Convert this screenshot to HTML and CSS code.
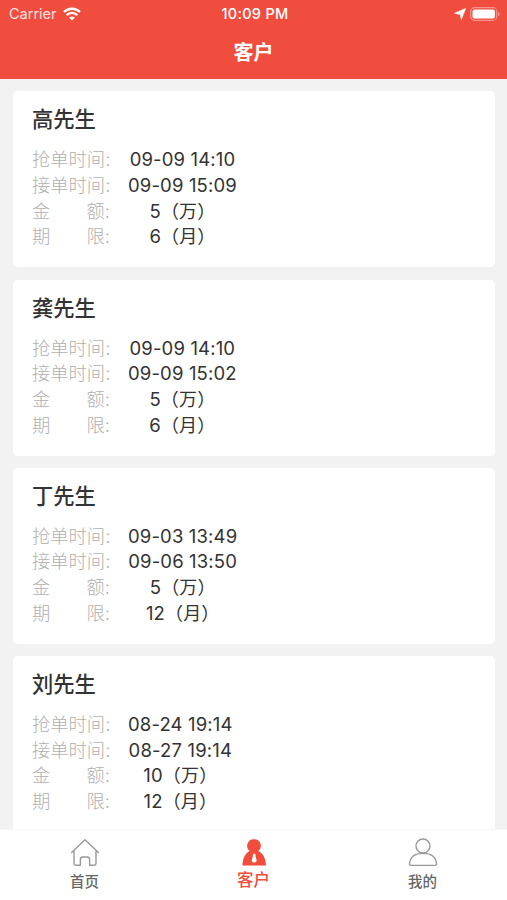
FILE: index.html
```
<!DOCTYPE html>
<html lang="zh-CN">
<head>
  <meta charset="UTF-8" />
  <title>客户</title>
  <link rel="stylesheet" href="styles.css">
</head>
<body>
  <div class="app">
    <header class="header">
      <div class="status-bar">
        <div class="status-left">
          <span class="carrier">Carrier</span>
          <svg class="wifi" width="18" height="14" viewBox="0 0 18 14">
            <path d="M1 5a11.5 11.5 0 0 1 16 0M3.7 8.1a7.5 7.5 0 0 1 10.6 0" fill="none" stroke="#fff" stroke-width="2.3" />
            <path d="M9 13.6L6.2 10.8a4 4 0 0 1 5.6 0z" fill="#fff" />
          </svg>
        </div>
        <span class="time">10:09 PM</span>
        <div class="status-right">
          <svg width="12" height="12" viewBox="0 0 12 12">
            <path d="M11.8 0.2L7.4 11.7L6 6.6L0.3 5.2z" fill="#fff" stroke="#fff" stroke-width=".4" />
          </svg>
          <svg width="31" height="14" viewBox="0 0 31 14">
            <rect x="0.7" y="0.7" width="26" height="12.6" rx="3.8" fill="none" stroke="#fff" stroke-opacity=".4" stroke-width="1.2" />
            <rect x="2.5" y="2.5" width="22.4" height="9" rx="2" fill="#fff" />
            <path d="M28.3 4.7v4.6c1.7-.7 1.7-3.9 0-4.6z" fill="#fff" fill-opacity=".5" />
          </svg>
        </div>
      </div>
      <h1 class="title">客户</h1>
    </header>

    <main class="list">
      <section class="card">
        <h2 class="name">高先生</h2>
        <div class="info">
          <div class="labels">
            <p><span>抢单时间</span>:</p>
            <p><span>接单时间</span>:</p>
            <p><span>金</span><span>额:</span></p>
            <p><span>期</span><span>限:</span></p>
          </div>
          <div class="values">
            <p>09-09 14:10</p>
            <p>09-09 15:09</p>
            <p>5<span class="unit">（万）</span></p>
            <p>6<span class="unit">（月）</span></p>
          </div>
        </div>
      </section>

      <section class="card">
        <h2 class="name">龚先生</h2>
        <div class="info">
          <div class="labels">
            <p><span>抢单时间</span>:</p>
            <p><span>接单时间</span>:</p>
            <p><span>金</span><span>额:</span></p>
            <p><span>期</span><span>限:</span></p>
          </div>
          <div class="values">
            <p>09-09 14:10</p>
            <p>09-09 15:02</p>
            <p>5<span class="unit">（万）</span></p>
            <p>6<span class="unit">（月）</span></p>
          </div>
        </div>
      </section>

      <section class="card">
        <h2 class="name">丁先生</h2>
        <div class="info">
          <div class="labels">
            <p><span>抢单时间</span>:</p>
            <p><span>接单时间</span>:</p>
            <p><span>金</span><span>额:</span></p>
            <p><span>期</span><span>限:</span></p>
          </div>
          <div class="values">
            <p>09-03 13:49</p>
            <p>09-06 13:50</p>
            <p>5<span class="unit">（万）</span></p>
            <p>12<span class="unit">（月）</span></p>
          </div>
        </div>
      </section>

      <section class="card">
        <h2 class="name">刘先生</h2>
        <div class="info">
          <div class="labels">
            <p><span>抢单时间</span>:</p>
            <p><span>接单时间</span>:</p>
            <p><span>金</span><span>额:</span></p>
            <p><span>期</span><span>限:</span></p>
          </div>
          <div class="values">
            <p>08-24 19:14</p>
            <p>08-27 19:14</p>
            <p>10<span class="unit">（万）</span></p>
            <p>12<span class="unit">（月）</span></p>
          </div>
        </div>
      </section>
    </main>

    <nav class="tabbar">
      <div class="tab">
        <svg width="30" height="30" viewBox="0 0 30 30" fill="none" stroke="#999" stroke-width="1.4" stroke-linecap="round" stroke-linejoin="round">
          <path d="M1.6 14.4L15 1.8l13.4 12.6M4 12.6v13q0 1.7 1.7 1.7h4.7v-6q0-2.3 2.3-2.3h4.6q2.3 0 2.3 2.3v6h4.7q1.7 0 1.7-1.7v-13" />
        </svg>
        <span>首页</span>
      </div>
      <div class="tab active">
        <svg width="30" height="30" viewBox="0 0 30 30">
          <path d="M15 1.2a6.6 6.6 0 0 1 4.4 11.7c4.2 2.1 7.2 6.6 7.6 14.6H3.4c.4-8 3.2-12.5 7.2-14.6A6.6 6.6 0 0 1 15 1.2z" fill="#f14c3c" />
          <path d="M15.2 15.8c1.2 0 1.6 1 1.3 2.2l1.1 4.2c.2 1.5-1.2 2.4-2.4 2.4s-2.6-.9-2.4-2.4l1.1-4.2c-.3-1.2.1-2.2 1.3-2.2z" fill="#fff" />
        </svg>
        <span>客户</span>
      </div>
      <div class="tab">
        <svg width="30" height="30" viewBox="0 0 30 30" fill="none" stroke="#999" stroke-width="1.4" stroke-linejoin="round">
          <circle cx="15" cy="8" r="7" />
          <path d="M1.5 26q.8-10.6 13.5-10.6T28.5 26q0 1.4-1.4 1.4H2.9q-1.4 0-1.4-1.4z" />
        </svg>
        <span>我的</span>
      </div>
    </nav>
  </div>
</body>
</html>
```
FILE: styles.css
```
* {
  box-sizing: border-box;
  margin: 0;
  padding: 0;
}
body {
  background: #f2f2f2;
  color: #333;
  font-family: Inter, "Noto Sans CJK SC", sans-serif;
}
svg {
  display: block;
}
.app {
  display: flex;
  flex-direction: column;
  height: 900px;
  overflow: hidden;
}
.header {
  flex: none;
  height: 79px;
  background: #f04d3e;
  color: #fff;
}
.status-bar {
  display: grid;
  grid-template-columns: 1fr auto 1fr;
  align-items: center;
  height: 27px;
  padding: 0 6px 0 9px;
}
.status-left,
.status-right {
  display: flex;
  align-items: center;
}
.status-left {
  gap: 6px;
}
.status-right {
  justify-content: flex-end;
  gap: 4px;
}
.carrier {
  font-size: 14.5px;
  opacity: 0.85;
}
.time {
  font-size: 14.5px;
  font-weight: 500;
  letter-spacing: 0.3px;
}
.title {
  font-size: 20px;
  font-weight: 700;
  line-height: 52px;
  text-align: center;
}
.list {
  flex: 1;
  min-height: 0;
  padding: 12.4px 12px 0 13px;
  overflow: hidden;
}
.card {
  height: 176px;
  margin-bottom: 12.2px;
  padding: 13px 19px;
  background: #fff;
  border-radius: 5px;
}
.name {
  font-size: 21.3px;
  font-weight: 500;
  line-height: 30px;
}
.info {
  display: flex;
  gap: 18px;
  margin-top: 13px;
  line-height: 25.7px;
}
/* two-character labels are spread to the width of the long ones */
.labels {
  width: 78px;
  color: #b0b0b0;
  font-size: 18.3px;
  font-weight: 300;
}
.labels p {
  display: flex;
  justify-content: space-between;
}
.values {
  font-size: 18.5px;
  letter-spacing: 0.15px;
  text-align: center;
}
.labels p,
.values p {
  height: 25.7px;
  white-space: nowrap;
}
.unit {
  font-family: "Noto Sans CJK SC", sans-serif;
  font-size: 18px;
  line-height: 1;
}
.tabbar {
  flex: none;
  display: grid;
  grid-template-columns: repeat(3, 1fr);
  height: 71px;
  padding-top: 8px;
  background: #fff;
  border-top: 1px solid #f8f8f8;
}
.tab {
  display: flex;
  flex-direction: column;
  align-items: center;
  color: #666;
  font-size: 14.5px;
  font-weight: 500;
  line-height: 27px;
}
.active {
  color: #f14c3c;
  font-size: 16.5px;
  line-height: 24px;
}
```
